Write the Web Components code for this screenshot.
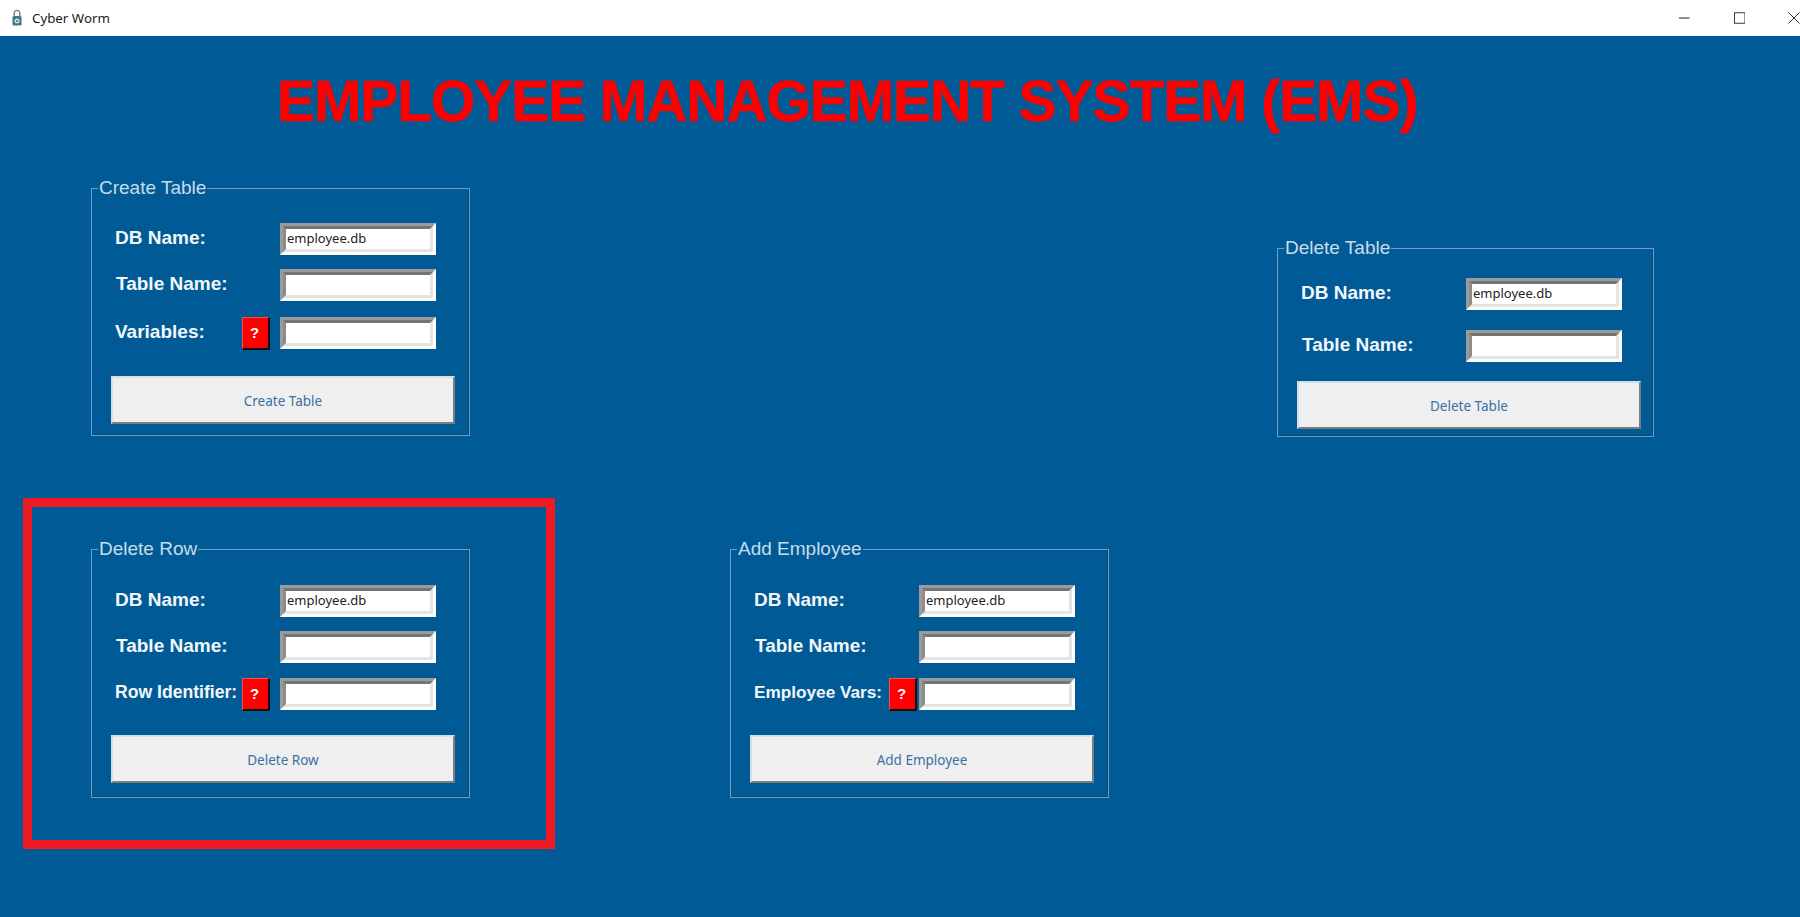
<!DOCTYPE html>
<html lang="en"><head><meta charset="utf-8"><title>Cyber Worm</title>
<style>
html,body{margin:0;padding:0;height:100%;overflow:hidden;background:#005a96}
body{display:flex;flex-direction:column;height:917px}
</style></head><body>
<template id="t-titlebar"><style>
:host{display:flex;align-items:center;height:36px;flex:none;background:#fff;color:#1a1a1a;font:13.3px "Noto Sans","Open Sans",sans-serif;overflow:hidden}
.ic{margin-left:11px;width:12px;height:18px;flex:none}
.name{margin-left:9px}
.ctl{margin-left:auto;display:flex;align-items:center;width:132px;flex:none}
svg{display:block}
</style>
<svg class="ic" viewBox="0 0 12 18"><path d="M3.2 7V4.200a2.800 2.800 0 0 1 5.600 0V7" fill="none" stroke="#6f8088" stroke-width="1.400"/><rect x="1.500" y="7" width="9" height="9.500" rx="1.500" fill="#3f7580"/><circle cx="6" cy="12" r="2.500" fill="#cfdcdf"/><circle cx="6" cy="12" r="1" fill="#3f7580"/><path d="M6 16.500h5" stroke="#c3d2d5"/></svg>
<span class="name"><slot></slot></span>
<span class="ctl">
<svg width="11" height="2" viewBox="0 0 11 2" style="margin-left:11px"><path d="M0 1h11" stroke="#111" stroke-width="1"/></svg>
<svg width="12" height="12" viewBox="0 0 12 12" style="margin-left:44px"><rect x=".5" y=".5" width="11" height="11" fill="none" stroke="#333"/></svg>
<svg width="12" height="12" viewBox="0 0 12 12" style="margin-left:43px;flex:none"><path d="M.5.5l11 11M11.500.5l-11 11" stroke="#333" fill="none"/></svg>
</span></template>

<template id="t-frame"><style>
:host{display:block;box-sizing:border-box;width:var(--w,379px);font-family:"Liberation Sans",Arial,sans-serif}
fieldset{margin:0;padding:0 12px 0 19px;border:1px solid #6c9dc3;box-shadow:inset -1px -1px 0 #0a4a78;min-height:var(--h,259px);box-sizing:border-box;display:flex;flex-direction:column}
legend{margin:0 0 0 -13px;padding:0 1px;font-size:19px;line-height:22px;color:#c9dcea;white-space:nowrap}
.body{display:flex;flex-direction:column;padding-top:var(--top,24px)}
</style><fieldset><legend><slot name="legend"></slot></legend><div class="body"><slot></slot></div></fieldset></template>

<template id="t-row"><style>
:host{display:flex;align-items:center;box-sizing:border-box;width:344px;height:32px;margin-top:var(--mt,0);padding-right:19px;font-family:"Liberation Sans",Arial,sans-serif}
.lab{font-weight:700;font-size:var(--ls,19px);color:#f2f7fb;margin-right:auto;white-space:nowrap;position:relative;top:-1.500px;padding-left:var(--pl,4px)}
.e{width:156px;height:32px;box-sizing:border-box;flex:none;border:3px solid;border-color:#9b9b9b #fff #fff #9b9b9b}
.i{box-sizing:border-box;height:100%;border:3px solid;border-color:#757575 #e4e4e4 #e4e4e4 #8c8c8c;background:#fff;font:13px "Noto Sans","Open Sans",sans-serif;color:#222;line-height:18px;padding-left:1px;overflow:hidden;white-space:nowrap}
</style><span class="lab"><slot name="label"></slot></span><slot name="help"></slot><div class="e"><div class="i"><slot name="value"></slot></div></div></template>

<template id="t-help"><style>
:host{display:flex;align-items:center;justify-content:center;box-sizing:border-box;width:28px;height:33px;margin-right:var(--hg,10px);padding-right:2px;flex:none;background:#f00;color:#fff;font:700 15px "Liberation Sans",Arial,sans-serif;border:solid;border-color:#ff4d4d #111 #111 #ff4d4d;border-width:1px 2px 2px 1px}
</style><slot></slot></template>

<template id="t-btn"><style>
:host{display:flex;align-items:center;justify-content:center;box-sizing:border-box;height:48px;margin:var(--mt,27px) 0 0 0;padding-top:1px;width:344px;background:#efefef;color:#3a70a6;font:13.500px "Noto Sans","Open Sans",sans-serif;border:solid;border-width:2px;border-color:#d3e0ea #7d7d7d #7d7d7d #d3e0ea}
</style><slot></slot></template>

<template id="t-mark"><style>
:host{display:block;box-sizing:border-box;width:532px;height:351px;border:9px solid #ed1c24;padding:31px 0 0 59px}
</style><slot></slot></template>

<template id="t-title"><style>
:host{display:block;color:#f00;font:700 57px/70px "Liberation Sans",Arial,sans-serif;letter-spacing:-1.080px;-webkit-text-stroke:.5px #f00;white-space:nowrap;padding:30px 0 0 277px;height:111px;box-sizing:content-box}
</style><slot></slot></template>

<template id="t-desk"><style>
:host{display:flex;flex-direction:column;flex:1;background:#005a96}
</style><slot></slot></template>

<template id="t-line"><style>
:host{display:flex;align-items:flex-start;height:var(--rh,auto)}
</style><slot></slot></template>

<ems-titlebar>Cyber Worm</ems-titlebar>
<ems-desk>
  <ems-title>EMPLOYEE MANAGEMENT SYSTEM (EMS)</ems-title>
  <ems-line style="--rh:321px;padding-left:91px">
    <ems-frame>
      <span slot="legend">Create Table</span>
      <ems-row><span slot="label">DB Name:</span><span slot="value">employee.db</span></ems-row>
      <ems-row style="--mt:14px;--pl:5px"><span slot="label">Table Name:</span></ems-row>
      <ems-row style="--mt:16px"><span slot="label">Variables:</span><ems-help slot="help">?</ems-help></ems-row>
      <ems-btn>Create Table</ems-btn>
    </ems-frame>
    <ems-frame style="margin:60px 0 0 807px;--w:376px;--h:200px;--top:19px">
      <span slot="legend">Delete Table</span>
      <ems-row style="--pl:4px"><span slot="label">DB Name:</span><span slot="value">employee.db</span></ems-row>
      <ems-row style="--mt:20px;--pl:5px"><span slot="label">Table Name:</span></ems-row>
      <ems-btn style="--mt:19px">Delete Table</ems-btn>
    </ems-frame>
  </ems-line>
  <ems-line style="padding-left:23px">
    <ems-mark>
      <ems-frame style="--h:260px;--top:25px">
        <span slot="legend">Delete Row</span>
        <ems-row><span slot="label">DB Name:</span><span slot="value">employee.db</span></ems-row>
        <ems-row style="--mt:14px;--pl:5px"><span slot="label">Table Name:</span></ems-row>
        <ems-row style="--mt:15px;--ls:17.600px"><span slot="label">Row Identifier:</span><ems-help slot="help">?</ems-help></ems-row>
        <ems-btn style="--mt:25px">Delete Row</ems-btn>
      </ems-frame>
    </ems-mark>
    <ems-frame style="margin:40px 0 0 175px;--h:260px;--top:25px">
      <span slot="legend">Add Employee</span>
      <ems-row><span slot="label">DB Name:</span><span slot="value">employee.db</span></ems-row>
      <ems-row style="--mt:14px;--pl:5px"><span slot="label">Table Name:</span></ems-row>
      <ems-row style="--mt:15px;--ls:17.200px;--hg:2px"><span slot="label">Employee Vars:</span><ems-help slot="help">?</ems-help></ems-row>
      <ems-btn style="--mt:25px">Add Employee</ems-btn>
    </ems-frame>
  </ems-line>
</ems-desk>
<script>
for (const n of ['titlebar','frame','row','help','btn','mark','title','desk','line']) {
  customElements.define('ems-' + n, class extends HTMLElement {
    constructor() {
      super();
      this.attachShadow({mode:'open'}).appendChild(document.getElementById('t-' + n).content.cloneNode(true));
    }
  });
}
</script>
</body></html>
